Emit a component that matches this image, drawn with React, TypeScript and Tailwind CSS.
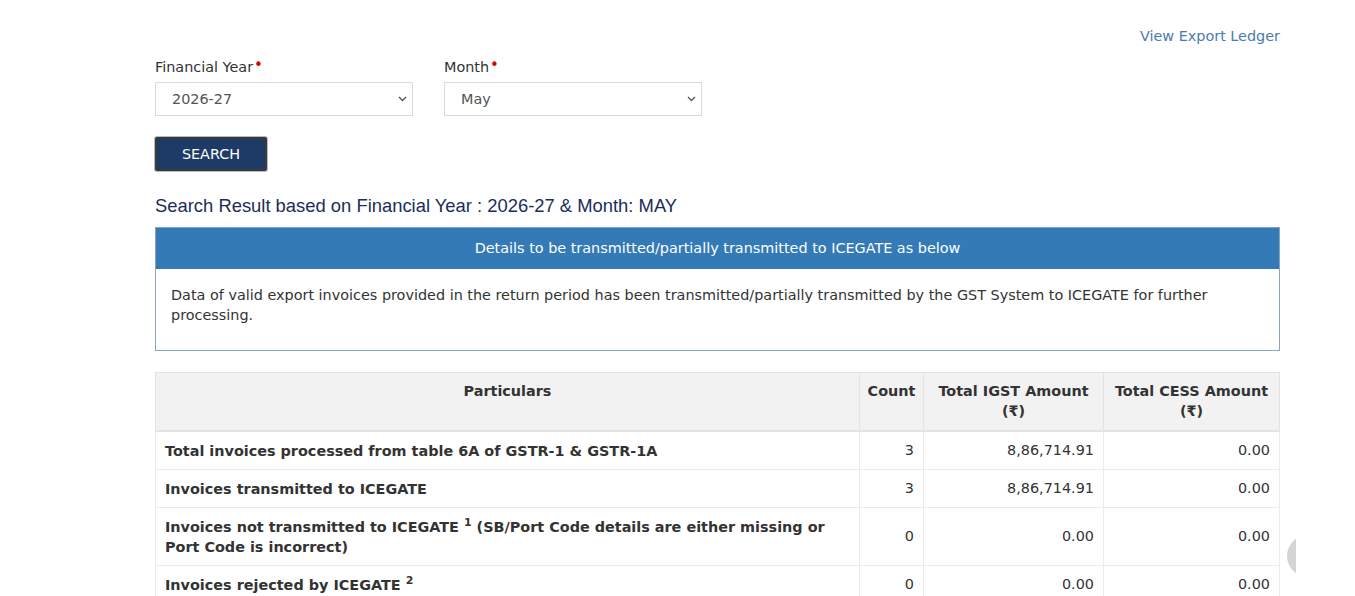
import React from "react";

const rows = [
  { label: "Total invoices processed from table 6A of GSTR-1 & GSTR-1A", count: "3", igst: "8,86,714.91", cess: "0.00" },
  { label: "Invoices transmitted to ICEGATE", count: "3", igst: "8,86,714.91", cess: "0.00" },
  {
    label: (
      <>
        Invoices not transmitted to ICEGATE <span className="relative -top-[6px] text-[11px] leading-none">1</span> (SB/Port Code
        details are either missing or Port Code is incorrect)
      </>
    ),
    count: "0",
    igst: "0.00",
    cess: "0.00",
  },
  {
    label: (
      <>
        Invoices rejected by ICEGATE <span className="relative -top-[6px] text-[11px] leading-none">2</span>
      </>
    ),
    count: "0",
    igst: "0.00",
    cess: "0.00",
  },
  { label: "Invoices pending at ICEGATE", count: "0", igst: "0.00", cess: "0.00" },
];

function Field({ label, value }: { label: string; value: string }) {
  return (
    <div className="w-[258px]">
      <label className="block h-5 leading-5 text-[14.4px] text-[#333]">
        {label}
        <span className="relative -top-[2px] ml-[1px] text-[15px] leading-none text-[#d00]">•</span>
      </label>
      <div className="relative mt-[5px]">
        <select
          defaultValue={value}
          className="h-[34px] w-full appearance-none border border-[#d9d9d9] bg-white pl-[16px] pt-[2px] text-[14.4px] text-[#555] outline-none"
        >
          <option>{value}</option>
        </select>
        <svg
          className="pointer-events-none absolute right-[6px] top-[14px]"
          width="9"
          height="6"
          viewBox="0 0 9 6"
          fill="none"
          stroke="#555"
          strokeWidth="1.3"
        >
          <path d="M1 1l3.5 3.5L8 1" />
        </svg>
      </div>
    </div>
  );
}

export default function App() {
  return (
    <div className="relative h-[596px] overflow-hidden bg-white font-['DejaVu_Sans',Verdana,sans-serif]">
      <div className="ml-[155px] w-[1125px] pt-[26px]">
        <div className="text-right leading-5">
          <a className="text-[14.4px] text-[#4a7bb0]">View Export Ledger</a>
        </div>

        <div className="mt-[11px] flex gap-[31px]">
          <Field label="Financial Year" value="2026-27" />
          <Field label="Month" value="May" />
        </div>

        <button className="mt-[21px] h-[34px] w-[112px] rounded-[2px] border-2 border-[#3a3a3a] bg-[#1e3a66] pt-[2px] text-[14.4px] text-white shadow-[0_0_0_1px_#bbb]">
          SEARCH
        </button>

        <h3 className="mt-[23px] font-['Liberation_Sans',Arial,sans-serif] text-[18.4px] leading-6 text-[#1c2d5a]">
          Search Result based on Financial Year : 2026-27 &amp; Month: MAY
        </h3>

        <div className="mt-[9px] border border-[#8aa4bf]">
          <div className="h-[41px] bg-[#337ab7] text-center text-[14.4px] leading-[41px] text-white">
            Details to be transmitted/partially transmitted to ICEGATE as below
          </div>
          <div className="px-[15px] pb-[25px] pt-[16px] text-[14.4px] leading-5 text-[#333]">
            Data of valid export invoices provided in the return period has been transmitted/partially transmitted by the GST
            System to ICEGATE for further processing.
          </div>
        </div>

        <table className="mt-[21px] w-full table-fixed border-collapse text-[14.4px] leading-5 text-[#333]">
          <colgroup>
            <col />
            <col className="w-[64px]" />
            <col className="w-[180px]" />
            <col className="w-[176px]" />
          </colgroup>
          <thead>
            <tr className="bg-[#f2f2f2] align-top">
              <th className="h-[58px] border-x border-t border-b-2 border-[#e3e3e3] px-2 pt-[8px] text-center font-bold">Particulars</th>
              <th className="border-x border-t border-b-2 border-[#e3e3e3] px-1 pt-[8px] text-center font-bold">Count</th>
              <th className="border-x border-t border-b-2 border-[#e3e3e3] px-2 pt-[8px] text-center font-bold">
                Total IGST Amount (₹)
              </th>
              <th className="border-x border-t border-b-2 border-[#e3e3e3] px-2 pt-[8px] text-center font-bold">
                Total CESS Amount (₹)
              </th>
            </tr>
          </thead>
          <tbody>
            {rows.map((r, i) => (
              <tr key={i} className="align-middle">
                <td className="border border-[#ebebeb] pb-[8px] pl-[9px] pr-8 pt-[9px] font-bold">{r.label}</td>
                <td className="border border-[#ebebeb] pr-[9px] text-right">{r.count}</td>
                <td className="border border-[#ebebeb] pr-[9px] text-right">{r.igst}</td>
                <td className="border border-[#ebebeb] pr-[9px] text-right">{r.cess}</td>
              </tr>
            ))}
          </tbody>
        </table>
      </div>

      <div className="absolute left-[1287px] top-[535px] h-[42px] w-[9px] overflow-hidden">
        <div className="h-[42px] w-[42px] rounded-full bg-[#d4d4d4]" />
      </div>
    </div>
  );
}
